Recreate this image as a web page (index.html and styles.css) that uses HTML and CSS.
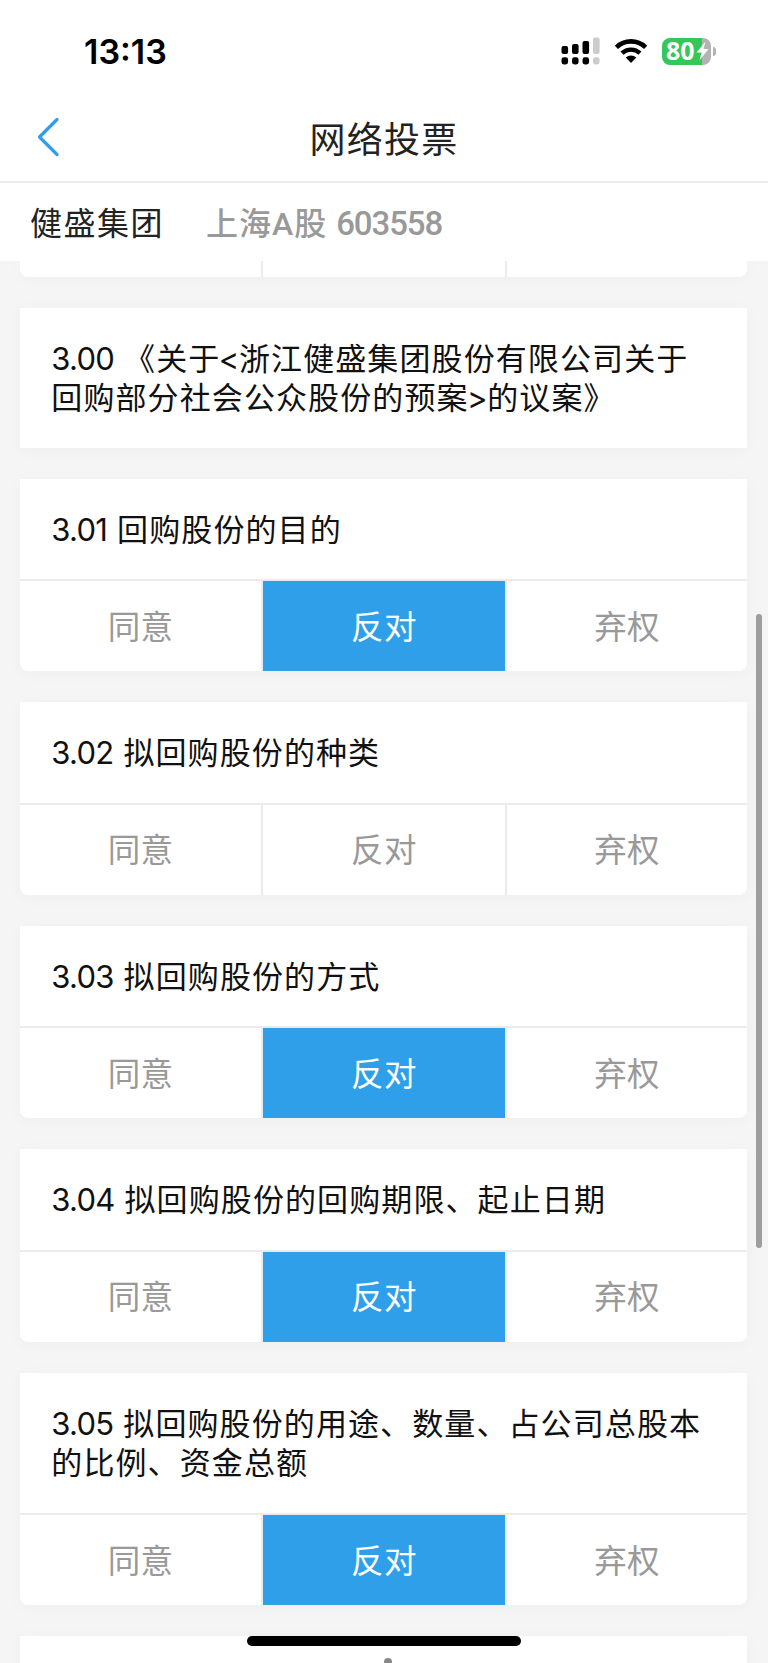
FILE: index.html
```
<!DOCTYPE html>
<html lang="zh-CN">
<head>
    <meta charset="UTF-8">
    <title>网络投票</title>
    <link rel="stylesheet" href="styles.css">
</head>
<body>
    <div class="status-bar">
        <span class="time">13:13</span>
        <div class="status-icons">
            <svg class="signal" width="40" height="28" viewBox="0 0 40 28">
                <rect x="0.5" y="9" width="6.6" height="8" rx="2"/>
                <rect x="11" y="7" width="6.6" height="10" rx="2"/>
                <rect x="21.5" y="4" width="6.6" height="13" rx="2"/>
                <rect x="32" y="0.5" width="6.6" height="16.5" rx="2" fill="#ccc"/>
                <rect x="0.5" y="20.3" width="6.6" height="7.2" rx="2.4"/>
                <rect x="11" y="20.3" width="6.6" height="7.2" rx="2.4"/>
                <rect x="21.5" y="20.3" width="6.6" height="7.2" rx="2.4"/>
                <rect x="32" y="20.3" width="6.6" height="7.2" rx="2.4" fill="#ccc"/>
            </svg>
            <svg class="wifi" width="34" height="26" viewBox="0 0 34 26">
                <path d="M2.4 9.3 A21 21 0 0 1 31.6 9.3" fill="none" stroke="#000" stroke-width="4.6"/>
                <path d="M8 15.2 A13 13 0 0 1 26 15.2" fill="none" stroke="#000" stroke-width="4.4"/>
                <path d="M11.7 19.4 A8 8 0 0 1 22.3 19.4 L17 25 Z"/>
            </svg>
            <div class="battery">
                <span>80</span>
                <svg class="bolt" width="13" height="20" viewBox="0 0 13 20">
                    <path d="M9.5 0.5 L0.5 11.5 H5.5 L3.5 19.5 L12.5 8 H7.5 Z" fill="#fff"/>
                </svg>
            </div>
            <div class="battery-tip"></div>
        </div>
    </div>

    <header class="navbar">
        <svg class="back" width="24" height="40" viewBox="0 0 24 40">
            <path d="M20 2.5 L2.5 20 L20 37.5" fill="none" stroke="#2f9fea" stroke-width="3.2" stroke-linecap="round" stroke-linejoin="round"/>
        </svg>
        <h1>网络投票</h1>
    </header>

    <div class="company">
        <span class="name">健盛集团</span>
        <span class="stock">上海A股 <span class="code">603558</span></span>
    </div>

    <main class="list">
        <div class="card card-prev">
            <div class="options">
                <div class="option"></div>
                <div class="option"></div>
                <div class="option"></div>
            </div>
        </div>

        <div class="card card-heading">
            <div class="title"><span class="num">3.00</span> 《关于<span class="angle">&lt;</span>浙江健盛集团股份有限公司关于<br>回购部分社会公众股份的预案<span class="angle">&gt;</span>的议案》</div>
        </div>

        <div class="card">
            <div class="title"><span class="num">3.01</span> 回购股份的目的</div>
            <div class="options">
                <div class="option">同意</div>
                <div class="option selected">反对</div>
                <div class="option">弃权</div>
            </div>
        </div>

        <div class="card">
            <div class="title"><span class="num">3.02</span> 拟回购股份的种类</div>
            <div class="options">
                <div class="option">同意</div>
                <div class="option">反对</div>
                <div class="option">弃权</div>
            </div>
        </div>

        <div class="card">
            <div class="title"><span class="num">3.03</span> 拟回购股份的方式</div>
            <div class="options">
                <div class="option">同意</div>
                <div class="option selected">反对</div>
                <div class="option">弃权</div>
            </div>
        </div>

        <div class="card">
            <div class="title"><span class="num">3.04</span> 拟回购股份的回购期限、起止日期</div>
            <div class="options">
                <div class="option">同意</div>
                <div class="option selected">反对</div>
                <div class="option">弃权</div>
            </div>
        </div>

        <div class="card">
            <div class="title"><span class="num">3.05</span> 拟回购股份的用途、数量、占公司总股本<br>的比例、资金总额</div>
            <div class="options">
                <div class="option">同意</div>
                <div class="option selected">反对</div>
                <div class="option">弃权</div>
            </div>
        </div>

        <div class="card card-next"></div>
    </main>

    <div class="scrollbar"></div>
    <div class="home-indicator"></div>
    <div class="dot"></div>
</body>
</html>
```
FILE: styles.css
```
* {
    box-sizing: border-box;
}

body {
    margin: 0;
    height: 1663px;
    overflow: hidden;
    position: relative;
    display: flex;
    flex-direction: column;
    background: #f5f5f5;
    font-family: Inter, "Noto Sans CJK SC", sans-serif;
    color: #111;
}

/* status bar */
.status-bar {
    flex: none;
    height: 96px;
    padding: 6px 52px 0 84px;
    display: flex;
    justify-content: space-between;
    align-items: center;
    background: #fff;
}

.time {
    font-size: 34px;
    font-weight: 600;
    letter-spacing: 0;
    color: #000;
}

.status-icons {
    display: flex;
    align-items: center;
}

.wifi {
    margin-left: 13px;
}

.battery {
    width: 49px;
    height: 27px;
    margin-left: 14px;
    padding-left: 4px;
    display: flex;
    align-items: center;
    border-radius: 8px;
    background: linear-gradient(to right, #34c759 40px, #b3b3b3 40px);
    color: #fff;
    font-family: "Noto Sans", sans-serif;
    font-size: 25px;
    font-weight: 700;
    line-height: 25px;
}

.battery span {
    padding-bottom: 2px;
}

.bolt {
    flex: none;
    margin-left: 1px;
}

.battery-tip {
    width: 3px;
    height: 9px;
    margin-left: 2px;
    border-radius: 0 4px 4px 0;
    background: #b3b3b3;
}

/* page header */
.navbar {
    flex: none;
    height: 87px;
    padding: 0 37px 3px;
    display: grid;
    grid-template-columns: 60px 1fr 60px;
    align-items: center;
    border-bottom: 2px solid #ebebeb;
    background: #fff;
}

.navbar h1 {
    margin: 0;
    font-size: 36px;
    font-weight: 400;
    letter-spacing: 1.3px;
    text-align: center;
    color: #222;
}

.company {
    flex: none;
    height: 78px;
    padding: 3px 30px 0;
    display: flex;
    align-items: center;
    background: #fff;
    font-size: 32px;
    line-height: 74px;
    letter-spacing: 1.5px;
}

.name {
    color: #222;
}

.stock {
    margin-left: 42px;
    font-family: Roboto, "Noto Sans CJK SC", sans-serif;
    font-weight: 500;
    letter-spacing: 1px;
    color: #999;
}

.code {
    font-size: 33px;
    letter-spacing: -1.1px;
}

/* proposals */
.list {
    flex: 1;
    min-height: 0;
    overflow: hidden;
    padding: 0 20.7px 0 20.3px;
}

.card {
    margin-bottom: 30.6px;
    border-radius: 0 0 8px 8px;
    background: #fff;
    box-shadow: 0 2px 16px rgba(0, 0, 0, 0.03);
}

.card-heading {
    border-radius: 0;
}

.card-prev .options {
    height: 16px;
    border-top: none;
}

.card-next {
    height: 60px;
}

.title {
    padding: 31px 31px 30px;
    font-size: 31px;
    line-height: 39.7px;
    letter-spacing: 1.1px;
    white-space: nowrap;
}

.num {
    letter-spacing: -0.7px;
}

.angle {
    margin: 0 -1.5px;
}

.options {
    height: 92.2px;
    display: grid;
    grid-template-columns: 240.6px 244px 1fr;
    border-top: 2px solid #ebebeb;
    border-radius: 0 0 8px 8px;
    overflow: hidden;
}

.option {
    display: flex;
    justify-content: center;
    align-items: center;
    padding-bottom: 4px;
    font-size: 32.5px;
    letter-spacing: 0.3px;
    color: #999;
}

.option + .option {
    border-left: 2px solid #ebebeb;
}

.option.selected {
    background: #2f9fea;
    background-clip: padding-box;
    color: #fff;
}

/* system overlays */
.scrollbar {
    position: absolute;
    right: 6px;
    top: 614px;
    width: 6px;
    height: 634px;
    border-radius: 3px;
    background: #9e9e9e;
}

.home-indicator {
    position: absolute;
    left: 247px;
    bottom: 17px;
    width: 274px;
    height: 10px;
    border-radius: 5px;
    background: #000;
}

.dot {
    position: absolute;
    left: 384px;
    bottom: -3px;
    width: 8px;
    height: 8px;
    border-radius: 50%;
    background: #888;
}
```
